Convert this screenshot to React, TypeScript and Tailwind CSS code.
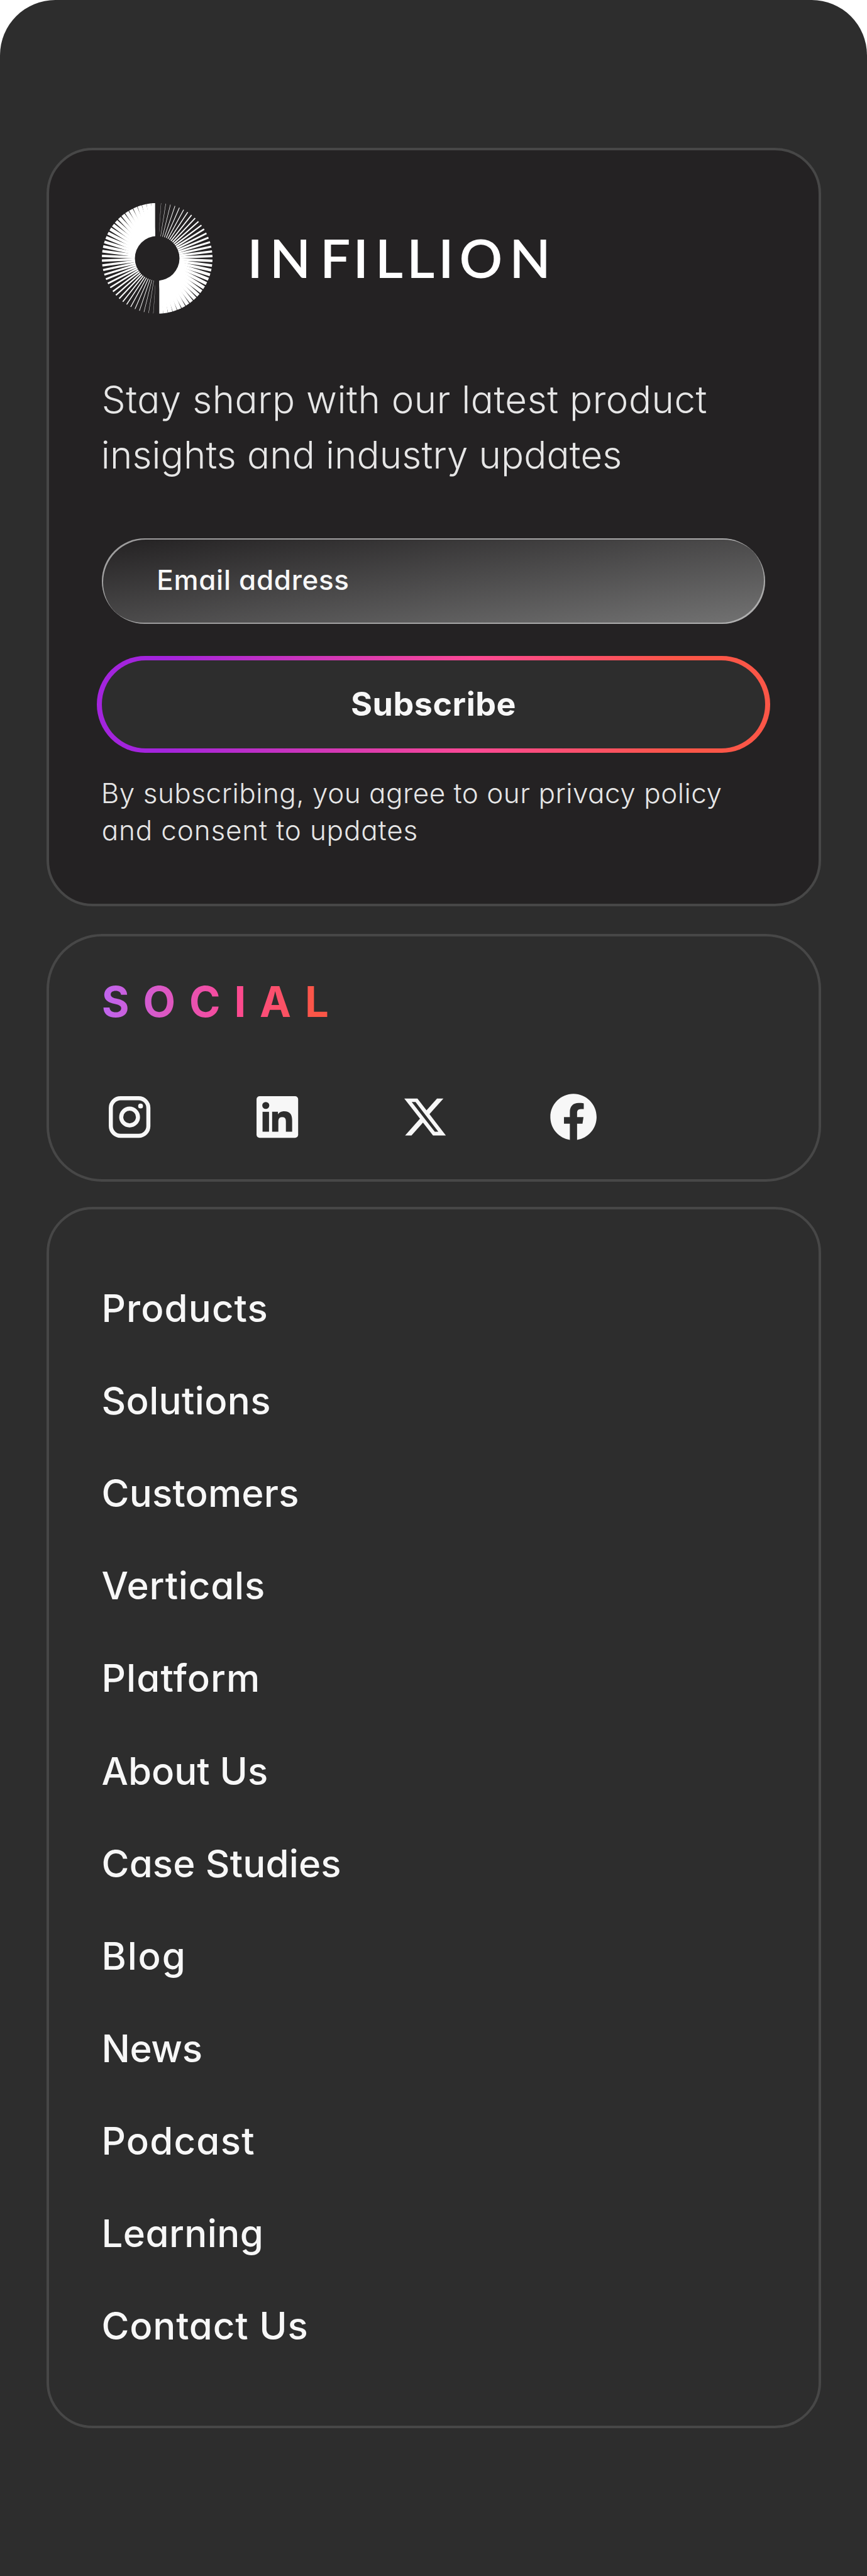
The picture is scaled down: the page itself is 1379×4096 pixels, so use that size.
import type { ReactNode } from "react";

interface NavItem {
  label: string;
  tracking: string;
}

const navItems: NavItem[] = [
  { label: "Products", tracking: "tracking-[1.08px]" },
  { label: "Solutions", tracking: "tracking-[0.32px]" },
  { label: "Customers", tracking: "tracking-[0.18px]" },
  { label: "Verticals", tracking: "tracking-[0.79px]" },
  { label: "Platform", tracking: "tracking-[1.1px]" },
  { label: "About Us", tracking: "tracking-[-0.05px]" },
  { label: "Case Studies", tracking: "tracking-[0.13px]" },
  { label: "Blog", tracking: "tracking-[1.8px]" },
  { label: "News", tracking: "tracking-[-0.39px]" },
  { label: "Podcast", tracking: "tracking-[1.2px]" },
  { label: "Learning", tracking: "tracking-[0.4px]" },
  { label: "Contact Us", tracking: "tracking-[0.8px]" },
];

const rays = Array.from({ length: 36 }, (_, i) => ({
  angle: 4 + i * 4.92,
  width: 0.222 * (i + 1) + 0.1,
}));

function Rays() {
  return (
    <g clipPath="url(#half)">
      {rays.map((r) => (
        <rect
          key={r.angle}
          x={-r.width / 2}
          y={-95.7}
          width={r.width}
          height={61}
          transform={`rotate(${r.angle})`}
        />
      ))}
    </g>
  );
}

function Logo() {
  return (
    <svg viewBox="176 352 784 192" className="block h-[176.5px] w-[720.8px]" fill="#fff">
      <defs>
        <clipPath id="half">
          <rect x="3.6" y="-96" width="93" height="192" />
        </clipPath>
      </defs>
      <g transform="translate(271.7 447.5)">
        <Rays />
        <g transform="rotate(180)">
          <Rays />
        </g>
        <circle r="38.6" fill="#242223" />
      </g>
      <text
        y="481"
        x="427.5 466 553.5 610.5 649 703.5 758 794.5 881"
        className="font-['Lato'] text-[93px] font-semibold"
      >
        INFILLION
      </text>
    </svg>
  );
}

function SocialIcon({ label, children }: { label: string; children: ReactNode }) {
  return (
    <a aria-label={label} className="block">
      <svg viewBox="0 0 24 24" className="block size-[88.25px]" fill="#f7f7f7">
        {children}
      </svg>
    </a>
  );
}

function Newsletter() {
  return (
    <section className="h-[1206px] rounded-[73.5px] border-4 border-[#474747] bg-[#242223] px-[84.3px] pt-[84.3px]">
      <Logo />
      <p className="mt-[91.3px] text-[60px] leading-[88.25px] font-light text-[#e6e6e6]">
        <span className="block tracking-[0.54px]">Stay sharp with our latest product</span>
        <span className="-ml-px block tracking-[0.14px]">insights and industry updates</span>
      </p>
      <div className="mt-[88px] flex h-[136px] items-center rounded-full bg-linear-[to_bottom_right,#232122,#737373] pb-[3px] pl-[87.5px] text-[44px] font-medium tracking-[0.67px] text-[#f7f7f7] shadow-[inset_2px_2px_0.5px_rgba(255,255,255,0.55),inset_-2px_-2px_0.5px_rgba(255,255,255,0.45)]">
        Email address
      </div>
      <button className="-mx-[7.35px] mt-[51.4px] block h-[154.4px] w-[1070.2px] rounded-full bg-linear-[to_right,#a324dd_10%,#fc4994_56%,#fb5647_86%] p-[7.35px]">
        <span className="flex h-full items-center justify-center rounded-full bg-[#2d2d2d] text-[52px] font-bold tracking-[0.53px] text-[#f7f7f7]">
          Subscribe
        </span>
      </button>
      <p className="mt-[35px] text-[44px] leading-[58.8px] font-light text-[#e6e6e6]">
        <span className="-ml-px block tracking-[0.5px]">
          By subscribing, you agree to our privacy policy
        </span>
        <span className="block tracking-[0.83px]">and consent to updates</span>
      </p>
    </section>
  );
}

function Social() {
  return (
    <section className="mt-[44px] h-[393.5px] rounded-[88px] border-4 border-[#474747] px-[84.3px] pt-[63.8px]">
      <h2 className="w-fit bg-linear-[to_right,#bf65ee,#fc4994_55%,#fb5647_88%] bg-clip-text text-[67px] leading-[80px] font-bold tracking-[21.86px] text-transparent">
        SOCIAL
      </h2>
      <div className="mt-[99.3px] flex gap-[147.1px]">
        <SocialIcon label="Instagram">
          <rect x="3.88" y="3.88" width="16.24" height="16.24" rx="4.2" fill="none" stroke="#f7f7f7" strokeWidth="1.76" />
          <circle cx="12" cy="12" r="3.62" fill="none" stroke="#f7f7f7" strokeWidth="1.76" />
          <circle cx="16.75" cy="7.25" r="1.05" />
        </SocialIcon>
        <SocialIcon label="LinkedIn">
          <rect x="3" y="3" width="18" height="18" rx="1.35" />
          <g fill="#2d2d2d">
            <circle cx="7" cy="7" r="1.52" />
            <rect x="5.6" y="9.75" width="2.8" height="8.6" />
            <path d="M9.75 9.75h2.5v1.15c.42-.8 1.32-1.4 2.75-1.4 2.75 0 3.4 1.75 3.4 4.1v4.75h-2.7v-4.2c0-1.05-.1-2.15-1.6-2.15-1.45 0-1.67 1.1-1.67 2.1v4.25H9.75z" />
          </g>
        </SocialIcon>
        <SocialIcon label="X">
          <path
            transform="translate(1.95 2.15) scale(.834 .8205)"
            d="M18.244 2.25h3.308l-7.227 8.26 8.502 11.24H16.17l-5.214-6.817L4.99 21.75H1.68l7.73-8.835L1.254 2.25H8.08l4.713 6.231zm-1.161 17.52h1.833L7.084 4.126H5.117z"
          />
        </SocialIcon>
        <SocialIcon label="Facebook">
          <path d="M12 2C6.477 2 2 6.477 2 12c0 4.991 3.657 9.128 8.438 9.879V14.89h-2.54V12h2.54V9.797c0-2.506 1.492-3.89 3.777-3.89 1.094 0 2.238.195 2.238.195v2.459h-1.26c-1.243 0-1.63.771-1.63 1.562V12h2.773l-.443 2.89h-2.33v6.989C18.343 21.129 22 16.99 22 12c0-5.523-4.477-10-10-10z" />
        </SocialIcon>
      </div>
    </section>
  );
}

export default function App() {
  return (
    <div className="bg-white">
      <footer className="h-[4096px] w-[1379px] rounded-t-[88px] bg-[#2d2d2d] px-[73.5px] pt-[235px] font-['Inter',sans-serif] [font-feature-settings:'cv11']">
        <Newsletter />
        <Social />
        <nav className="mt-[40px] h-[1942px] rounded-[73.5px] border-4 border-[#474747] px-[84px] pt-[84.6px]">
          <ul>
            {navItems.map((item) => (
              <li
                key={item.label}
                className={`h-[147.1px] text-[60px] leading-[147.1px] font-medium text-[#f7f7f7] ${item.tracking}`}
              >
                {item.label}
              </li>
            ))}
          </ul>
        </nav>
      </footer>
    </div>
  );
}
